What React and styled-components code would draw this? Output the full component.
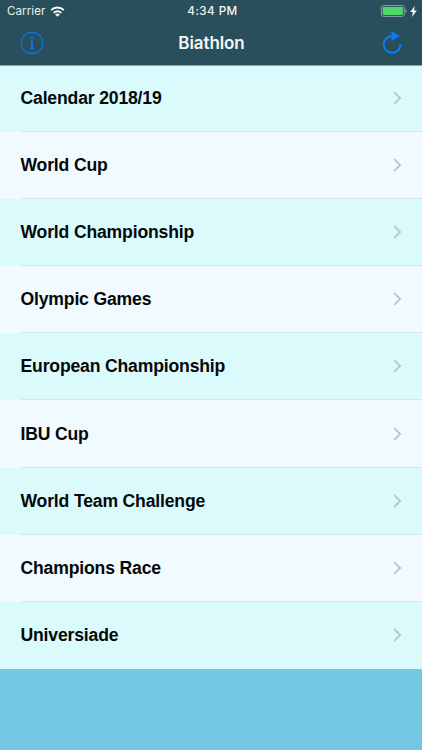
import React from 'react';
import styled, { createGlobalStyle } from 'styled-components';

const GlobalStyle = createGlobalStyle`
  * {
    box-sizing: border-box;
  }

  body {
    margin: 0;
    background-color: #74c7e3;
  }
`;

const Screen = styled.div`
  display: flex;
  flex-direction: column;
  height: 750px;
  overflow: hidden;
  background-color: #74c7e3;
  font-family: Inter, 'Liberation Sans', sans-serif;
`;

//header
const Header = styled.header`
  position: relative;
  z-index: 1;
  height: 64.7px;
  flex-shrink: 0;
  background-color: #284f5b;
  box-shadow: 0 1px 0 #86a8b0; // hairline over the first row
  color: #fff;
`;

const StatusBar = styled.div`
  display: grid;
  grid-template-columns: 1fr auto 1fr;
  align-items: center;
  height: 22px;
  padding: 0 5px 0 7px;
`;

const StatusLeft = styled.div`
  display: flex;
  align-items: center;
  gap: 5px;
`;

const StatusRight = styled.div`
  display: flex;
  align-items: center;
  justify-content: flex-end;
  gap: 3px;
`;

const Carrier = styled.span`
  font-size: 11.6px;
  letter-spacing: 0.05px;
  color: #e9eff1;
`;

const Clock = styled.span`
  padding-left: 1px;
  font-size: 11.7px;
  font-weight: 500;
  letter-spacing: 0.4px;
  color: #f3f7f8;
`;

const NavBar = styled.div`
  display: grid;
  grid-template-columns: 1fr auto 1fr;
  align-items: center;
  height: 42px;
  padding: 0 19px 0 20px;
`;

const Title = styled.h1`
  margin: 0;
  font-size: 17px;
  font-weight: 600;
  letter-spacing: -0.1px;
  color: #f3f7f8;
`;

const IconButton = styled.button`
  display: flex;
  justify-self: ${(props) => props.$side};
  padding: 0;
  border: 0;
  background: none;
`;

//list
const List = styled.ul`
  margin: 0;
  padding: 0;
  list-style: none;
`;

const Row = styled.li`
  display: flex;
  height: 67.17px;
  padding-left: 20.5px;
  background-color: #f1fafe;

  &:nth-child(odd) {
    background-color: #dafafc;
  }
`;

const RowContent = styled.div`
  display: flex;
  flex: 1;
  align-items: center;
  justify-content: space-between;
  padding-right: 20px;
  border-bottom: 1px solid ${(props) => (props.$last ? 'transparent' : '#d2e6eb')};
`;

const RowLabel = styled.span`
  padding-top: 1px;
  font-family: 'Liberation Sans', Arial, sans-serif;
  font-size: 17.6px;
  font-weight: 700;
  letter-spacing: -0.17px;
  color: #050808;
`;

const WifiIcon = () => (
  <svg width="15" height="11" viewBox="0 0 15 11" fill="none" stroke="#fff">
    <path d="M1.2 4.1a9 9 0 0 1 12.6 0" strokeWidth="2" />
    <path d="M3.7 6.8a5.4 5.4 0 0 1 7.6 0" strokeWidth="1.9" />
    <path d="M7.5 10.8 5.2 8.5a3.3 3.3 0 0 1 4.6 0z" fill="#fff" stroke="none" />
  </svg>
);

const BatteryIcon = () => (
  <svg width="27" height="12" viewBox="0 0 27 12" fill="none">
    <rect x="1.3" y="0.6" width="23" height="10.8" rx="2.4" stroke="#8fa3aa" />
    <rect x="2.7" y="2" width="20.2" height="8" rx="1.2" fill="#4cd964" />
    <path d="M25.4 4.1c1.6.6 1.6 3.2 0 3.8z" fill="#8fa3aa" />
  </svg>
);

const BoltIcon = () => (
  <svg width="7" height="11" viewBox="0 0 6 10" fill="#fff">
    <path d="M4.2 0 0 5.5h2.5L1.6 10 6 4.2H3.4z" />
  </svg>
);

const InfoIcon = () => (
  <svg width="24" height="24" viewBox="0 0 24 24" fill="none" stroke="#0b74e0">
    <circle cx="12" cy="12" r="10.7" strokeWidth="1.2" />
    <circle cx="11.8" cy="6.9" r="1.4" fill="#0b74e0" stroke="none" />
    <path d="M9.9 10.3h2.1M9.8 17.4h4.5" strokeWidth="1.1" />
    <path d="M12 9.8v7.6" strokeWidth="2.1" />
  </svg>
);

const RefreshIcon = () => (
  <svg width="22" height="24" viewBox="0 0 22 24" fill="none">
    <path d="M11 5.1a8.4 8.4 0 1 0 8.5 8.1" stroke="#0b7cf5" strokeWidth="2.1" />
    <path d="M10.5 0 18.9 5l-8.4 4.9z" fill="#0b7cf5" />
  </svg>
);

const ChevronIcon = () => (
  <svg width="9" height="14" viewBox="0 0 9 14" fill="none">
    <path d="M1.2 1.1 7.2 7l-6 5.9" stroke="#b7c6cb" strokeWidth="1.8" />
  </svg>
);

const competitions = [
  'Calendar 2018/19',
  'World Cup',
  'World Championship',
  'Olympic Games',
  'European Championship',
  'IBU Cup',
  'World Team Challenge',
  'Champions Race',
  'Universiade',
];

const App = () => {
  return (
    <Screen>
      <GlobalStyle />

      <Header>
        <StatusBar>
          <StatusLeft>
            <Carrier>Carrier</Carrier>
            <WifiIcon />
          </StatusLeft>
          <Clock>4:34 PM</Clock>
          <StatusRight>
            <BatteryIcon />
            <BoltIcon />
          </StatusRight>
        </StatusBar>

        <NavBar>
          <IconButton $side="start" aria-label="Info">
            <InfoIcon />
          </IconButton>
          <Title>Biathlon</Title>
          <IconButton $side="end" aria-label="Refresh">
            <RefreshIcon />
          </IconButton>
        </NavBar>
      </Header>

      <List>
        {competitions.map((name, index) => (
          <Row key={name}>
            <RowContent $last={index === competitions.length - 1}>
              <RowLabel>{name}</RowLabel>
              <ChevronIcon />
            </RowContent>
          </Row>
        ))}
      </List>
    </Screen>
  );
};

export default App;
